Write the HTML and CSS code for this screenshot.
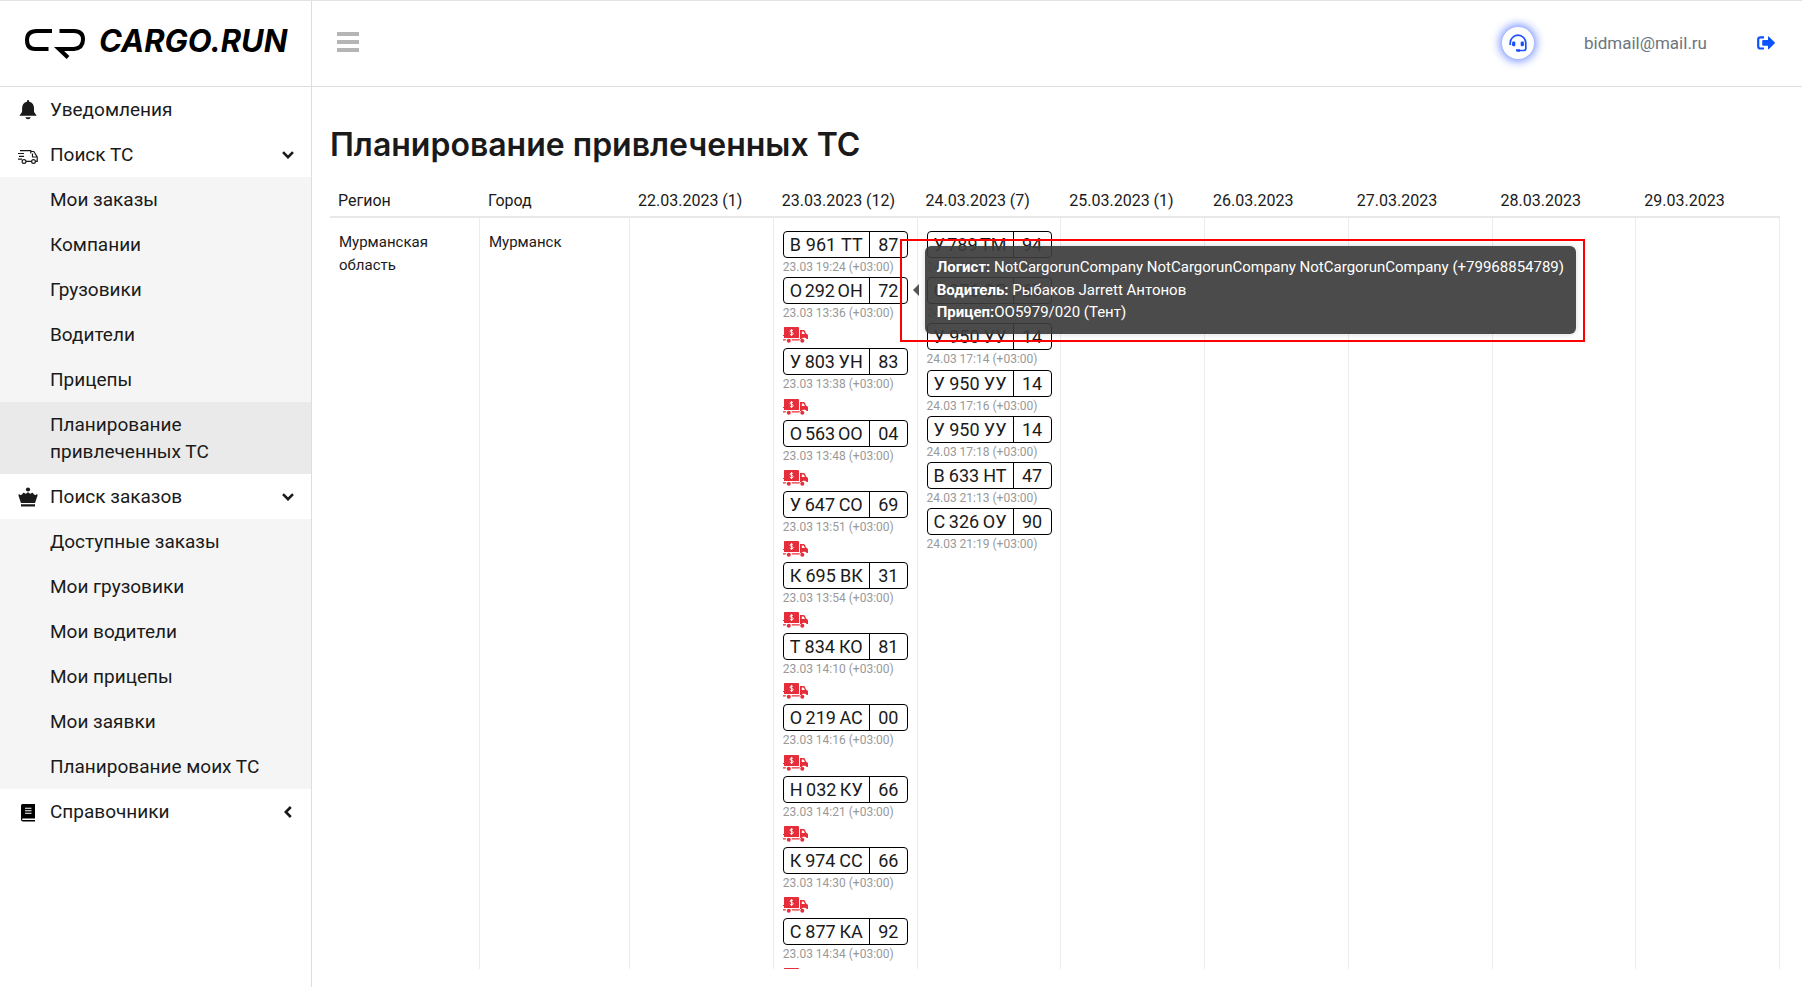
FILE: index.html
```
<!DOCTYPE html>
<html lang="ru">

<head>
    <meta charset="UTF-8">
    <meta name="viewport" content="width=device-width, initial-scale=1.0">
    <title>Планирование привлеченных ТС</title>
    <link rel="stylesheet" href="styles.css">
</head>

<body>
    <!-- Icons used more than once -->
    <svg class="sprite" aria-hidden="true">
        <symbol id="icon-paid-truck" viewBox="0 0 25 16">
            <path fill="#e62e3a" d="M1.500 0H15a1 1 0 0 1 1 1v10H1V9H0V8h1V1Q1 0 1.500 0zM17 3h3.500q1 0 1.500 1l1 2.500 1.500 1q.5.500.500 1.200V12h-1.200a2.600 2.600 0 0 0-2-1.300H21a2.600 2.600 0 0 0-2.500 1.300H17zm1.800 1.400V7h3L21 5q-.2-.6-.8-.6zM0 12.200h3.200q-.5.600-.4 1.300H0zM8.500 12.200H17q-.5.600-.4 1.300H8.900q0-.7-.4-1.300z" />
            <circle cx="5.800" cy="13.800" r="2" fill="#e62e3a" />
            <circle cx="19.300" cy="13.800" r="2" fill="#e62e3a" />
            <path fill="none" stroke="#fff" stroke-width="1" d="M10 3.800Q9.600 3.200 8.500 3.200 7.100 3.200 7.100 4.200q0 .9 1.500 1.200 1.600.3 1.600 1.300 0 1.100-1.600 1.100-1.300 0-1.800-.8M8.600 2v7" />
        </symbol>
        <symbol id="icon-chevron" viewBox="0 0 12 8">
            <path fill="none" stroke="#1a1a1a" stroke-width="2.600" d="M1 1.200l5 5 5-5" />
        </symbol>
    </svg>

    <div class="layout">
        <!-- Sidebar -->
        <aside class="sidebar">
            <a href="#" class="logo">
                <svg class="logo-mark" viewBox="0 0 60 30" aria-hidden="true">
                    <path fill="none" stroke="#000" stroke-width="4" d="M27 2H12Q2 2 2 11t8 9h13.500M34.500 2H49q9 0 9 8.500T49 20H34l9 8.500" />
                </svg>
                <span class="logo-text">CARGO.RUN</span>
            </a>
            <nav class="menu">
                <a href="#" class="menu-item">
                    <svg class="menu-icon" viewBox="0 0 20 20" aria-hidden="true">
                        <path fill="#1a1a1a" d="M9 1.200a1.100 1.100 0 0 1 2.200 0v.5C14.500 2.300 16 5 16 8v3.500c0 1.600 2.500 2.700 2.500 4.300H1.600c0-1.600 2.500-2.700 2.500-4.300V8C4.100 5 5.700 2.300 9 1.700zM7.300 17.300h5.500q-.6 2-2.700 2t-2.800-2z" />
                    </svg>
                    <span>Уведомления</span>
                </a>
                <button type="button" class="menu-item">
                    <svg class="menu-icon menu-icon-low" viewBox="0 0 20 20" aria-hidden="true">
                        <path fill="none" stroke="#1a1a1a" stroke-width="1.200" d="M2 3.600h10.800v2.800M0 6.500h6M1 9.400h5M0 12.200h4M8 14.400h5.500M12.800 4.500h3l3.400 5.500v4.400H17.500M14.500 6.500v3.500h4.500" />
                        <circle cx="6" cy="14.500" r="1.900" fill="#fff" stroke="#1a1a1a" stroke-width="1.200" />
                        <circle cx="15.500" cy="14.500" r="1.900" fill="#fff" stroke="#1a1a1a" stroke-width="1.200" />
                    </svg>
                    <span>Поиск ТС</span>
                    <svg class="menu-arrow" aria-hidden="true"><use href="#icon-chevron" /></svg>
                </button>
                <div class="submenu">
                    <a href="#" class="menu-item">Мои заказы</a>
                    <a href="#" class="menu-item">Компании</a>
                    <a href="#" class="menu-item">Грузовики</a>
                    <a href="#" class="menu-item">Водители</a>
                    <a href="#" class="menu-item">Прицепы</a>
                    <a href="#" class="menu-item active">Планирование привлеченных ТС</a>
                </div>
                <button type="button" class="menu-item">
                    <svg class="menu-icon" viewBox="0 0 20 20" aria-hidden="true">
                        <path fill="#1a1a1a" d="M3 16L.6 9Q0 7.500 1 7.200q.8-.2 1.300.8 1.700.5 2.700-2 .7-.7 1.400 0 1.500 1.500 2.800-.6h1.600q1.300 2.100 2.800.6.700-.7 1.400 0 1 2.500 2.700 2 .5-1 1.300-.8 1 .3.400 1.800L17 16zM3 17.300h14v2.200H3z" />
                        <circle cx="10" cy="2.500" r="2.100" fill="#1a1a1a" />
                    </svg>
                    <span>Поиск заказов</span>
                    <svg class="menu-arrow" aria-hidden="true"><use href="#icon-chevron" /></svg>
                </button>
                <div class="submenu">
                    <a href="#" class="menu-item">Доступные заказы</a>
                    <a href="#" class="menu-item">Мои грузовики</a>
                    <a href="#" class="menu-item">Мои водители</a>
                    <a href="#" class="menu-item">Мои прицепы</a>
                    <a href="#" class="menu-item">Мои заявки</a>
                    <a href="#" class="menu-item">Планирование моих ТС</a>
                </div>
                <button type="button" class="menu-item">
                    <svg class="menu-icon menu-icon-low" viewBox="0 0 20 20" aria-hidden="true">
                        <path fill="#000" d="M4.500 0H17v14.500H4.800q-.8 0-.8.800t.8.800H17v1.500H5q-2 0-2-2V1.500Q3 0 4.500 0z" />
                        <path stroke="#fff" stroke-width="1.100" d="M7 4.300h6.500M7 6.800h6.500M7 9.300h6.500" />
                    </svg>
                    <span>Справочники</span>
                    <svg class="menu-arrow collapsed" aria-hidden="true"><use href="#icon-chevron" /></svg>
                </button>
            </nav>
        </aside>
        <!-- End of Sidebar -->

        <div class="page">
            <header class="topbar">
                <button type="button" class="burger" aria-label="Меню">
                    <span class="burger-line"></span>
                    <span class="burger-line"></span>
                    <span class="burger-line"></span>
                </button>
                <button type="button" class="support" aria-label="Поддержка">
                    <svg class="support-icon" viewBox="0 0 18 18" aria-hidden="true">
                        <path fill="none" stroke="#1a4fff" stroke-width="1.700" d="M1.200 11V9a7.800 7.800 0 0 1 15.600 0v5.500q0 2-2 2H9" />
                        <path fill="#1a4fff" d="M3.500 7.500h1.800q1 0 1 1v2.800q0 1-1 1h-.8q-1.600 0-1.600-2zM14.500 7.500h-1.800q-1 0-1 1v2.800q0 1 1 1h.8q1.600 0 1.600-2zM7 15.200h4v2.600H8.500Q7 17.800 7 16.500z" />
                    </svg>
                </button>
                <a href="#" class="user">bidmail@mail.ru</a>
                <a href="#" class="logout" aria-label="Выход">
                    <svg class="logout-icon" viewBox="0 0 18 14" aria-hidden="true">
                        <path fill="none" stroke="#0d52ff" stroke-width="2.200" d="M7 1.300H3.500q-2.300 0-2.300 2.300v6.600q0 2.300 2.300 2.300H7" />
                        <path fill="#0d52ff" d="M11 1.200q0-1.400 1-.5l5.600 5.500q.7.700 0 1.400L12 13.100q-1 .9-1-.5V9.700H6.200q-1 0-1-1V5.100q0-1 1-1H11z" />
                    </svg>
                </a>
            </header>

            <main class="content">
                <h1 class="title">Планирование привлеченных ТС</h1>
                <div class="table-wrap">
                    <table class="plan">
                        <colgroup>
                            <col class="col-place">
                            <col class="col-place">
                            <col span="8">
                        </colgroup>
                        <thead>
                            <tr>
                                <th>Регион</th>
                                <th>Город</th>
                                <th>22.03.2023 (1)</th>
                                <th>23.03.2023 (12)</th>
                                <th>24.03.2023 (7)</th>
                                <th>25.03.2023 (1)</th>
                                <th>26.03.2023</th>
                                <th>27.03.2023</th>
                                <th>28.03.2023</th>
                                <th>29.03.2023</th>
                            </tr>
                        </thead>
                        <tbody>
                            <tr>
                                <td>Мурманская область</td>
                                <td>Мурманск</td>
                                <td></td>
                                <td>
                                    <div class="slot">
                                        <div class="plate"><div class="plate-number"><span>В</span> <span>961</span> <span>ТТ</span></div><div class="plate-region">87</div></div>
                                        <div class="time">23.03 19:24 (+03:00)</div>
                                    </div>
                                    <div class="slot">
                                        <div class="plate"><div class="plate-number"><span>О</span> <span>292</span> <span>ОН</span></div><div class="plate-region">72</div></div>
                                        <div class="time">23.03 13:36 (+03:00)</div>
                                        <svg class="paid"><use href="#icon-paid-truck" /></svg>
                                        <div class="highlight">
                                            <div class="tooltip" role="tooltip">
                                                <div><b>Логист:</b> NotCargorunCompany NotCargorunCompany NotCargorunCompany (+79968854789)</div>
                                                <div><b>Водитель:</b> Рыбаков Jarrett Антонов</div>
                                                <div><b>Прицеп:</b>ОО5979/020 (Тент)</div>
                                            </div>
                                        </div>
                                    </div>
                                    <div class="slot">
                                        <div class="plate"><div class="plate-number"><span>У</span> <span>803</span> <span>УН</span></div><div class="plate-region">83</div></div>
                                        <div class="time">23.03 13:38 (+03:00)</div>
                                        <svg class="paid"><use href="#icon-paid-truck" /></svg>
                                    </div>
                                    <div class="slot">
                                        <div class="plate"><div class="plate-number"><span>О</span> <span>563</span> <span>ОО</span></div><div class="plate-region">04</div></div>
                                        <div class="time">23.03 13:48 (+03:00)</div>
                                        <svg class="paid"><use href="#icon-paid-truck" /></svg>
                                    </div>
                                    <div class="slot">
                                        <div class="plate"><div class="plate-number"><span>У</span> <span>647</span> <span>СО</span></div><div class="plate-region">69</div></div>
                                        <div class="time">23.03 13:51 (+03:00)</div>
                                        <svg class="paid"><use href="#icon-paid-truck" /></svg>
                                    </div>
                                    <div class="slot">
                                        <div class="plate"><div class="plate-number"><span>К</span> <span>695</span> <span>ВК</span></div><div class="plate-region">31</div></div>
                                        <div class="time">23.03 13:54 (+03:00)</div>
                                        <svg class="paid"><use href="#icon-paid-truck" /></svg>
                                    </div>
                                    <div class="slot">
                                        <div class="plate"><div class="plate-number"><span>Т</span> <span>834</span> <span>КО</span></div><div class="plate-region">81</div></div>
                                        <div class="time">23.03 14:10 (+03:00)</div>
                                        <svg class="paid"><use href="#icon-paid-truck" /></svg>
                                    </div>
                                    <div class="slot">
                                        <div class="plate"><div class="plate-number"><span>О</span> <span>219</span> <span>АС</span></div><div class="plate-region">00</div></div>
                                        <div class="time">23.03 14:16 (+03:00)</div>
                                        <svg class="paid"><use href="#icon-paid-truck" /></svg>
                                    </div>
                                    <div class="slot">
                                        <div class="plate"><div class="plate-number"><span>Н</span> <span>032</span> <span>КУ</span></div><div class="plate-region">66</div></div>
                                        <div class="time">23.03 14:21 (+03:00)</div>
                                        <svg class="paid"><use href="#icon-paid-truck" /></svg>
                                    </div>
                                    <div class="slot">
                                        <div class="plate"><div class="plate-number"><span>К</span> <span>974</span> <span>СС</span></div><div class="plate-region">66</div></div>
                                        <div class="time">23.03 14:30 (+03:00)</div>
                                        <svg class="paid"><use href="#icon-paid-truck" /></svg>
                                    </div>
                                    <div class="slot">
                                        <div class="plate"><div class="plate-number"><span>С</span> <span>877</span> <span>КА</span></div><div class="plate-region">92</div></div>
                                        <div class="time">23.03 14:34 (+03:00)</div>
                                        <svg class="paid"><use href="#icon-paid-truck" /></svg>
                                    </div>
                                </td>
                                <td>
                                    <div class="slot">
                                        <div class="plate"><div class="plate-number"><span>У</span> <span>789</span> <span>ТМ</span></div><div class="plate-region">94</div></div>
                                        <div class="time">24.03 17:11 (+03:00)</div>
                                    </div>
                                    <div class="slot">
                                        <div class="plate"><div class="plate-number"><span>О</span> <span>976</span> <span>ОР</span></div><div class="plate-region">67</div></div>
                                        <div class="time">24.03 17:12 (+03:00)</div>
                                    </div>
                                    <div class="slot">
                                        <div class="plate"><div class="plate-number"><span>У</span> <span>950</span> <span>УУ</span></div><div class="plate-region">14</div></div>
                                        <div class="time">24.03 17:14 (+03:00)</div>
                                    </div>
                                    <div class="slot">
                                        <div class="plate"><div class="plate-number"><span>У</span> <span>950</span> <span>УУ</span></div><div class="plate-region">14</div></div>
                                        <div class="time">24.03 17:16 (+03:00)</div>
                                    </div>
                                    <div class="slot">
                                        <div class="plate"><div class="plate-number"><span>У</span> <span>950</span> <span>УУ</span></div><div class="plate-region">14</div></div>
                                        <div class="time">24.03 17:18 (+03:00)</div>
                                    </div>
                                    <div class="slot">
                                        <div class="plate"><div class="plate-number"><span>В</span> <span>633</span> <span>НТ</span></div><div class="plate-region">47</div></div>
                                        <div class="time">24.03 21:13 (+03:00)</div>
                                    </div>
                                    <div class="slot">
                                        <div class="plate"><div class="plate-number"><span>С</span> <span>326</span> <span>ОУ</span></div><div class="plate-region">90</div></div>
                                        <div class="time">24.03 21:19 (+03:00)</div>
                                    </div>
                                </td>
                                <td></td>
                                <td></td>
                                <td></td>
                                <td></td>
                                <td></td>
                            </tr>
                        </tbody>
                    </table>
                </div>
            </main>
        </div>
    </div>
</body>

</html>
```
FILE: styles.css
```
* {
    box-sizing: border-box;
}

body {
    margin: 0;
    background: #fff;
    color: #1a1a1a;
    font-family: Roboto, sans-serif;
    font-size: 18px;
}

a {
    color: inherit;
    text-decoration: none;
}

button {
    padding: 0;
    border: 0;
    background: none;
    color: inherit;
    font: inherit;
    text-align: left;
    cursor: pointer;
}

.sprite {
    display: none;
}

.layout {
    display: flex;
    height: 100vh;
    border-top: 1px solid #e3e3e3;
}

/* Sidebar */
.sidebar {
    flex: none;
    width: 312px;
    border-right: 1px solid #dedede;
}

.logo {
    display: flex;
    align-items: center;
    gap: 14px;
    height: 86px;
    padding: 0 20px 6px 25px;
    border-bottom: 1px solid #dedede;
}

.logo-mark {
    flex: none;
    width: 60px;
    height: 30px;
    margin-top: 6px;
}

.logo-text {
    color: #000;
    font: italic 700 31px Inter, sans-serif;
}

.menu {
    display: flex;
    flex-direction: column;
}

.menu-item {
    display: flex;
    align-items: center;
    gap: 12px;
    padding: 9px 17px 9px 18px;
    font-size: 19px;
    line-height: 27px;
}

.submenu {
    background: #f5f5f5;
}

.submenu .menu-item {
    padding-left: 50px;
}

.submenu .active {
    background: #eaeaea;
}

.menu-icon {
    width: 20px;
    height: 20px;
}

.menu-icon-low {
    margin-top: 4px;
}

.menu-arrow {
    width: 12px;
    height: 8px;
    margin-left: auto;
}

.collapsed {
    transform: rotate(90deg);
}

/* Top bar */
.page {
    display: flex;
    flex: 1;
    flex-direction: column;
    min-width: 0;
}

.topbar {
    display: flex;
    flex: none;
    align-items: center;
    height: 86px;
    padding: 0 27px 1px 25px;
    border-bottom: 1px solid #dedede;
}

.burger {
    display: flex;
    flex-direction: column;
    gap: 4px;
    margin-right: auto;
    padding-bottom: 2px;
}

.burger-line {
    width: 22px;
    height: 4px;
    background: #b5b5b5;
}

.support {
    display: flex;
    align-items: center;
    justify-content: center;
    width: 32px;
    height: 32px;
    border-radius: 50%;
    box-shadow: 0 0 10px 2px #6f8cff;
}

.support-icon {
    width: 18px;
    height: 18px;
}

.user {
    margin: 0 50px;
    color: #6c757d;
    font-size: 17px;
}

.logout {
    display: flex;
}

.logout-icon {
    width: 18px;
    height: 14px;
}

/* Planning table */
.content {
    display: flex;
    flex: 1;
    flex-direction: column;
    min-height: 0;
    padding: 38px 22px 18px 18px;
}

.title {
    margin: 0 0 16px;
    font: 600 32px/40px Inter, sans-serif;
}

.table-wrap {
    flex: 1;
    min-height: 0;
    overflow: hidden;
}

.plan {
    width: 100%;
    border-collapse: separate;
    border-spacing: 0;
    table-layout: fixed;
}

.col-place {
    width: 150px;
}

.plan th {
    height: 37px;
    padding: 3px 8px 0;
    border-bottom: 2px solid #e8e8e8;
    font-size: 16px;
    font-weight: 400;
    text-align: left;
}

.plan td {
    height: 800px;
    padding: 13px 9px;
    border-right: 1px solid #ececec;
    font-size: 15px;
    line-height: 23px;
    vertical-align: top;
}

.slot {
    position: relative;
}

.plate {
    display: flex;
    width: 125px;
    height: 27px;
    border: 1px solid #000;
    border-radius: 4px;
    font-size: 18px;
    line-height: 25px;
}

.plate-number {
    display: flex;
    flex: 1;
    justify-content: space-between;
    padding: 0 6px;
}

.plate-region {
    width: 38px;
    border-left: 1px solid #000;
    text-align: center;
}

.time {
    color: #999;
    font-size: 12px;
    line-height: 1.6;
    white-space: nowrap;
}

.paid {
    display: block;
    width: 25px;
    height: 16px;
    margin: 4px 0 5px;
}

.highlight {
    position: absolute;
    top: -38px;
    left: 117px;
    z-index: 1;
    padding: 5px 7px 6px 23px;
    border: 2px solid #f00;
}

.tooltip {
    position: relative;
    padding: 10px 12px;
    border-radius: 6px;
    background: rgba(60, 60, 60, .92);
    box-shadow: 0 0 6px rgba(0, 0, 0, .15);
    color: #fff;
    font-size: 15px;
    line-height: 1.5;
    white-space: nowrap;
}

/* Arrow pointing at the plate */
.tooltip::before {
    content: "";
    position: absolute;
    top: 38px;
    left: -12px;
    border: 6px solid transparent;
    border-left: 0;
    border-right-color: #555;
}
```
